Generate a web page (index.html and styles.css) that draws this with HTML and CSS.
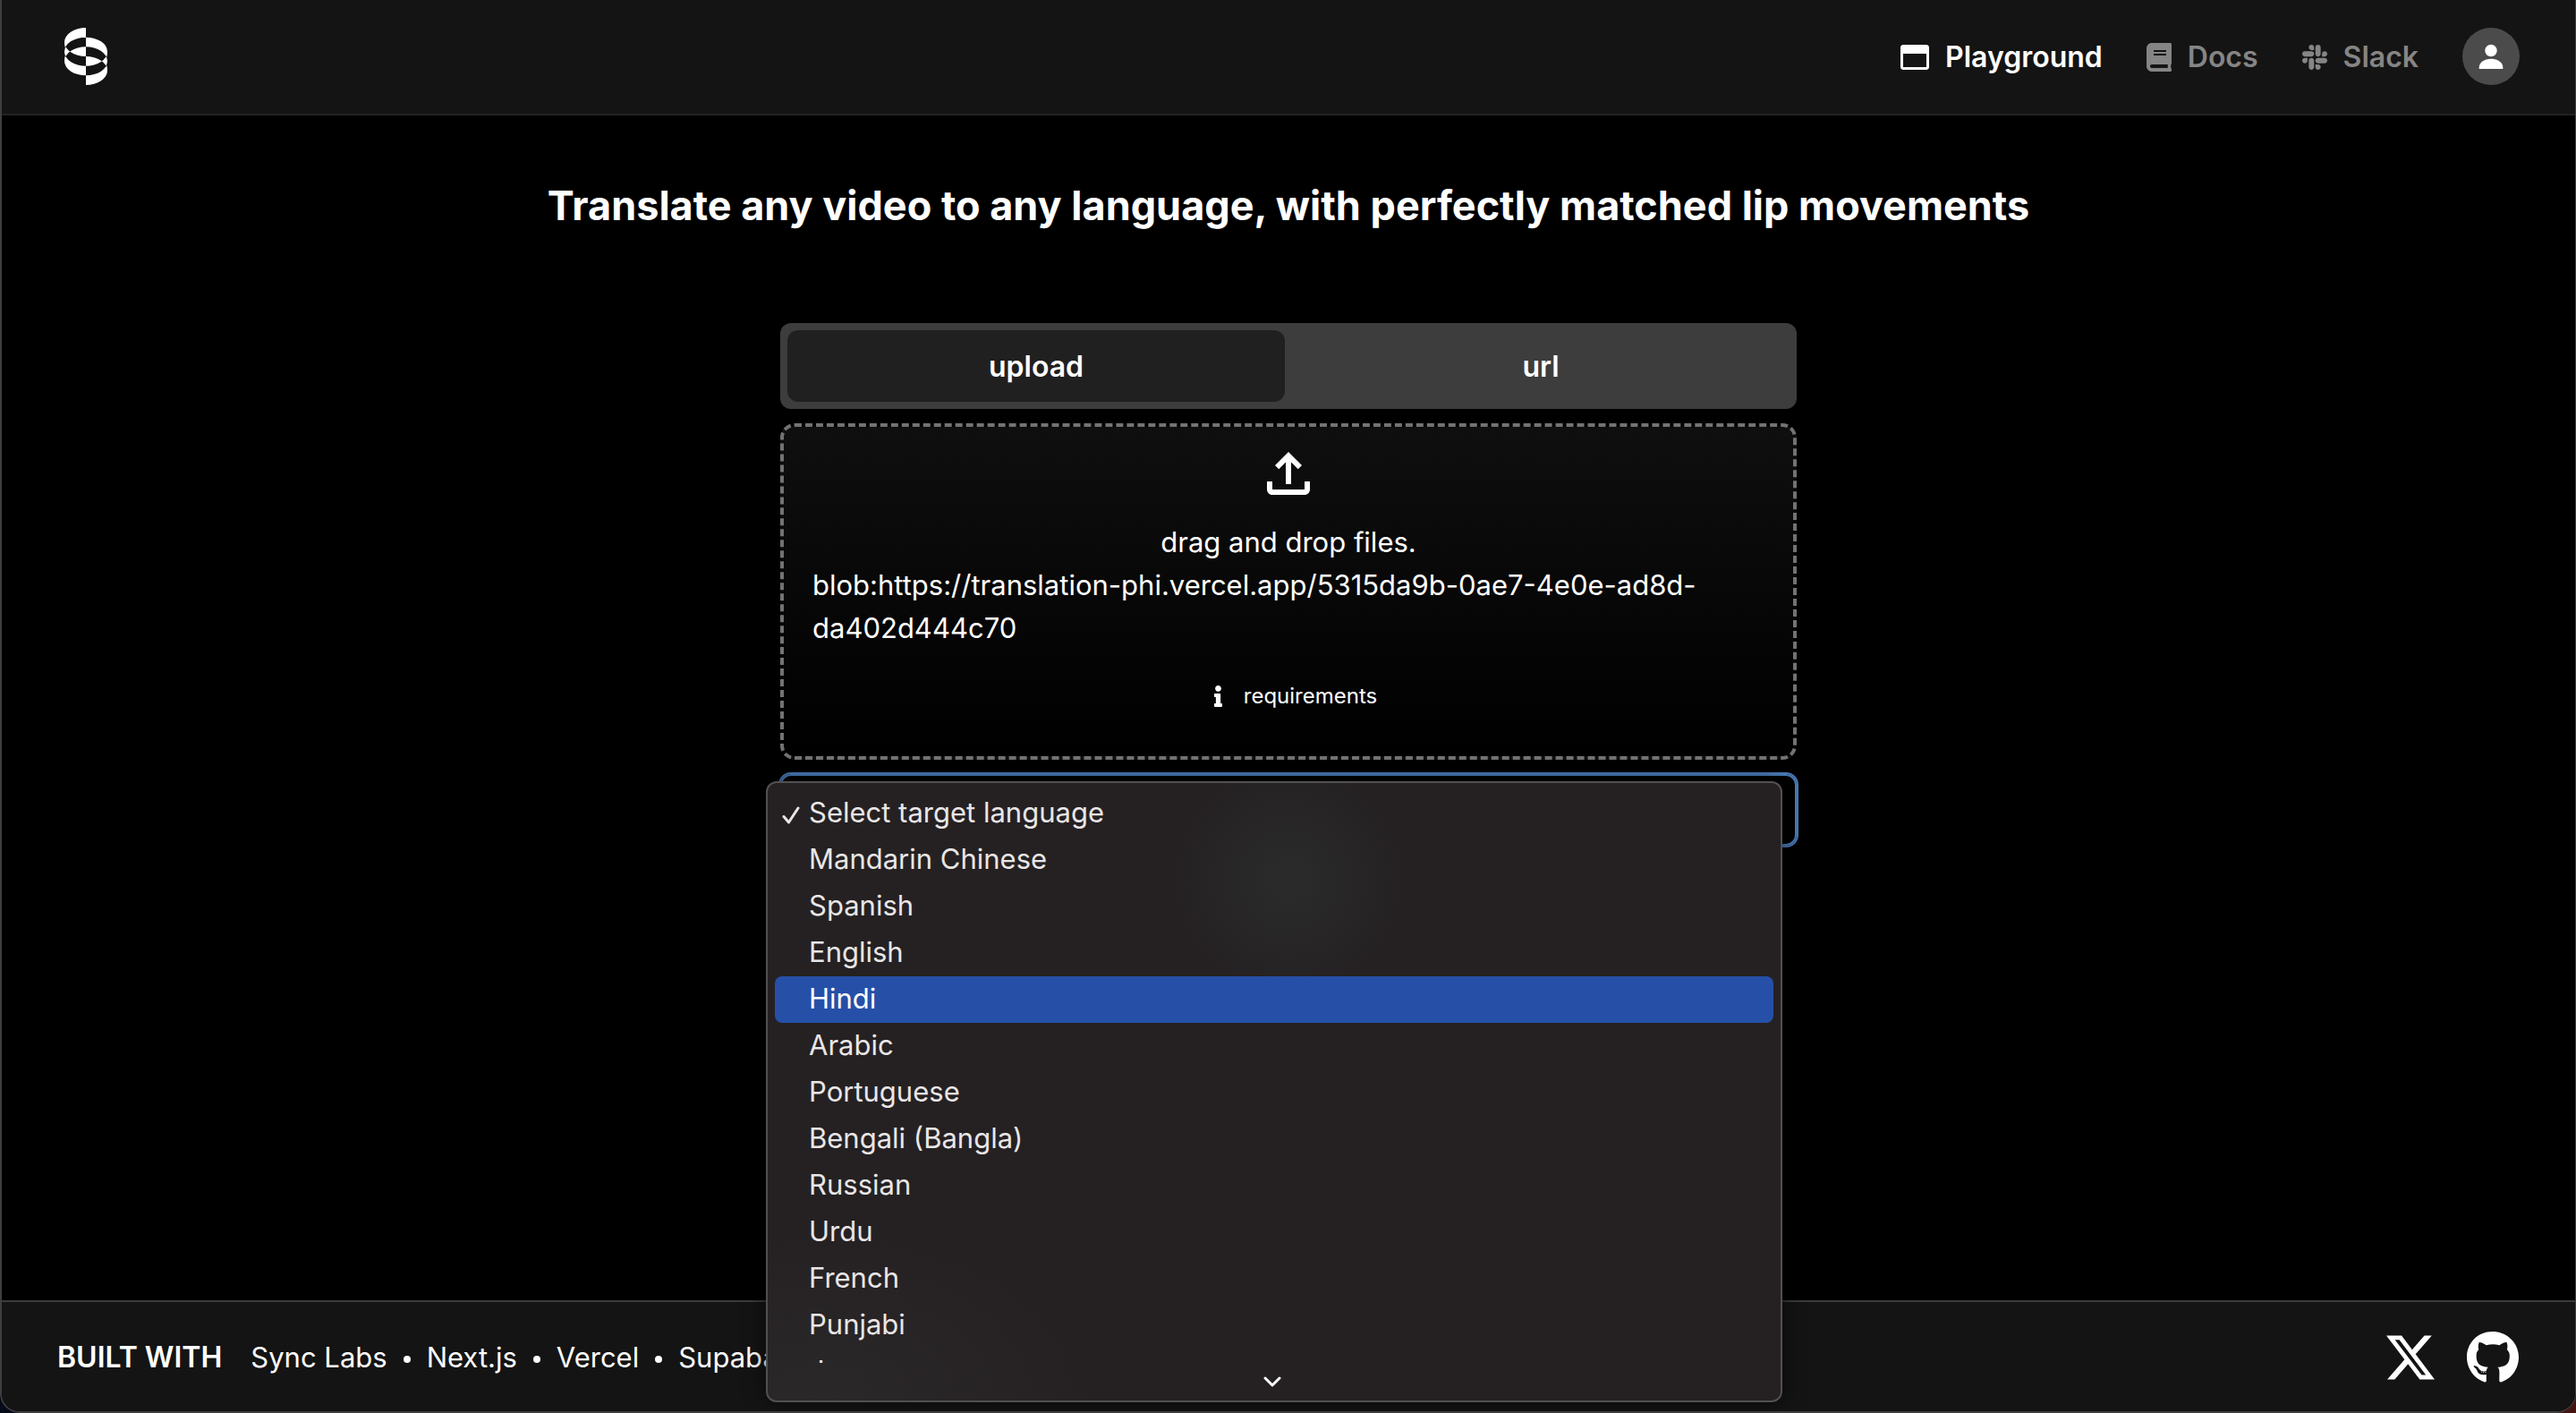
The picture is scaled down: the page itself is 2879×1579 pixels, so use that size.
FILE: index.html
```html
<!DOCTYPE html>
<html lang="en">
<head>
<meta charset="utf-8">
<meta name="viewport" content="width=device-width, initial-scale=1">
<title>Translate any video</title>
<link rel="stylesheet" href="styles.css">
</head>
<body>
<div class="window">
  <header class="header">
    <a class="logo" href="#" aria-label="Sync Labs">
      <svg viewBox="0 0 144 192" width="48" height="64" fill="currentColor" fill-rule="evenodd" aria-hidden="true">
        <path d="M72 0A72 48 0 0 0 72 96ZM72 32A72 48 0 0 0 72 128ZM72 64A72 48 0 0 0 72 160Z"/>
        <path d="M72 32A72 48 0 0 1 72 128ZM72 64A72 48 0 0 1 72 160ZM72 96A72 48 0 0 1 72 192Z"/>
        <path d="M0 48h2v12l-2 8ZM0 112h2v-12l-2-8ZM144 80h-2v12l2 8ZM144 144h-2v-12l2-8Z"/>
      </svg>
    </a>
    <nav class="nav">
      <a class="nav-link nav-link--active" href="#">
        <svg viewBox="0 0 512 512" width="32" height="32" fill="currentColor" aria-hidden="true"><path d="M464 32H48C21.500 32 0 53.500 0 80v352c0 26.500 21.500 48 48 48h416c26.500 0 48-21.500 48-48V80c0-26.500-21.500-48-48-48zm0 394c0 3.300-2.700 6-6 6H54c-3.300 0-6-2.700-6-6V192h416v234z"/></svg>
        <span>Playground</span>
      </a>
      <a class="nav-link" href="#">
        <svg viewBox="0 0 448 512" width="28" height="32" fill="currentColor" aria-hidden="true"><path d="M448 360V24c0-13.300-10.700-24-24-24H96C43 0 0 43 0 96v320c0 53 43 96 96 96h328c13.300 0 24-10.700 24-24v-16c0-7.500-3.500-14.300-8.900-18.700-4.200-15.400-4.200-59.300 0-74.700 5.400-4.300 8.900-11.100 8.900-18.600zM128 134c0-3.300 2.700-6 6-6h212c3.300 0 6 2.700 6 6v20c0 3.300-2.700 6-6 6H134c-3.300 0-6-2.700-6-6v-20zm0 64c0-3.300 2.700-6 6-6h212c3.300 0 6 2.700 6 6v20c0 3.300-2.700 6-6 6H134c-3.300 0-6-2.700-6-6v-20zm253.400 250H96c-17.700 0-32-14.300-32-32 0-17.600 14.400-32 32-32h285.400c-1.900 17.100-1.900 46.900 0 64z"/></svg>
        <span>Docs</span>
      </a>
      <a class="nav-link" href="#">
        <svg viewBox="0 0 448 512" width="28" height="32" fill="currentColor" aria-hidden="true"><path d="M94.120 315.100c0 25.900-21.160 47.060-47.060 47.060S0 341 0 315.100c0-25.900 21.160-47.060 47.060-47.060h47.060v47.060zm23.720 0c0-25.900 21.160-47.060 47.060-47.060s47.060 21.160 47.060 47.060v117.840c0 25.900-21.160 47.060-47.060 47.060s-47.060-21.160-47.060-47.060V315.100zm47.060-188.980c-25.900 0-47.060-21.160-47.060-47.060S139 32 164.900 32s47.060 21.160 47.060 47.060v47.060H164.900zm0 23.720c25.900 0 47.060 21.160 47.060 47.060s-21.160 47.060-47.060 47.060H47.060C21.160 243.960 0 222.800 0 196.900s21.160-47.060 47.060-47.060H164.900zm188.980 47.060c0-25.900 21.160-47.060 47.060-47.060 25.900 0 47.060 21.160 47.060 47.060s-21.160 47.060-47.060 47.060h-47.060V196.900zm-23.720 0c0 25.900-21.160 47.060-47.060 47.060-25.900 0-47.060-21.160-47.060-47.060V79.060c0-25.900 21.160-47.060 47.060-47.060 25.900 0 47.060 21.160 47.060 47.060V196.900zM283.100 385.880c25.900 0 47.060 21.160 47.060 47.060 0 25.900-21.160 47.060-47.060 47.060-25.900 0-47.060-21.160-47.060-47.060v-47.060h47.060zm0-23.720c-25.900 0-47.060-21.160-47.060-47.060 0-25.900 21.160-47.060 47.060-47.060h117.840c25.900 0 47.060 21.160 47.060 47.060 0 25.900-21.160 47.060-47.060 47.060H283.100z"/></svg>
        <span>Slack</span>
      </a>
      <button class="avatar" type="button" aria-label="Account">
        <svg viewBox="0 0 64 64" width="64" height="64" fill="currentColor" aria-hidden="true"><circle cx="32" cy="25.500" r="6.700"/><path d="M18.700 46v-1.500c0-5.500 5.500-9.800 13.300-9.800s13.300 4.300 13.300 9.800V46z"/></svg>
      </button>
    </nav>
  </header>

  <main class="main">
    <h1 class="title">Translate any video to any language, with perfectly matched lip movements</h1>
    <form class="form">
      <div class="tabs" role="tablist">
        <button class="tab tab--active" type="button" role="tab" aria-selected="true">upload</button>
        <button class="tab" type="button" role="tab" aria-selected="false">url</button>
      </div>
      <div class="dropzone">
        <svg class="upload-icon" viewBox="0 0 24 24" width="72" height="72" fill="currentColor" aria-hidden="true"><path d="M18 15v3H6v-3H4v3c0 1.100.900 2 2 2h12c1.100 0 2-.900 2-2v-3h-2zM7 9l1.410 1.410L11 7.830V16h2V7.830l2.590 2.580L17 9l-5-5-5 5z"/></svg>
        <p class="hint">drag and drop files.</p>
        <p class="blob">blob:https://translation-phi.vercel.app/5315da9b-0ae7-4e0e-ad8d-da402d444c70</p>
        <button class="requirements" type="button">
          <svg viewBox="0 0 192 512" width="9" height="24" fill="currentColor" aria-hidden="true"><path d="M20 424.229h20V279.771H20c-11.046 0-20-8.954-20-20V212c0-11.046 8.954-20 20-20h112c11.046 0 20 8.954 20 20v212.229h20c11.046 0 20 8.954 20 20V492c0 11.046-8.954 20-20 20H20c-11.046 0-20-8.954-20-20v-47.771c0-11.046 8.954-20 20-20zM96 0C56.235 0 24 32.235 24 72s32.235 72 72 72 72-32.235 72-72S135.764 0 96 0z"/></svg>
          <span>requirements</span>
        </button>
      </div>
      <div class="language">
        <select class="language-select" aria-label="Target language">
          <option>Select target language</option>
        </select>
        <div class="menu">
          <ul class="menu-list" role="listbox" aria-label="Languages">
            <li class="menu-item" role="option" aria-selected="true">
              <svg class="check" viewBox="0 0 20 22" width="20" height="22" fill="none" stroke="currentColor" stroke-width="3" stroke-linecap="round" stroke-linejoin="round" aria-hidden="true"><path d="M2 12.500L7.500 19 18 3"/></svg>
              Select target language
            </li>
            <li class="menu-item" role="option">Mandarin Chinese</li>
            <li class="menu-item" role="option">Spanish</li>
            <li class="menu-item" role="option">English</li>
            <li class="menu-item menu-item--hover" role="option">Hindi</li>
            <li class="menu-item" role="option">Arabic</li>
            <li class="menu-item" role="option">Portuguese</li>
            <li class="menu-item" role="option">Bengali (Bangla)</li>
            <li class="menu-item" role="option">Russian</li>
            <li class="menu-item" role="option">Urdu</li>
            <li class="menu-item" role="option">French</li>
            <li class="menu-item" role="option">Punjabi</li>
            <li class="menu-item" role="option">Japanese</li>
          </ul>
          <div class="menu-more">
            <svg viewBox="0 0 20 12" width="20" height="12" fill="none" stroke="currentColor" stroke-width="3" stroke-linecap="round" stroke-linejoin="round" aria-hidden="true"><path d="M2 2l8 8 8-8"/></svg>
          </div>
        </div>
      </div>
    </form>
  </main>

  <footer class="footer">
    <div class="credits">
      <strong class="credits-title">BUILT WITH</strong>
      <ul class="credits-list">
        <li><a href="#">Sync Labs</a></li>
        <li><a href="#">Next.js</a></li>
        <li><a href="#">Vercel</a></li>
        <li><a href="#">Supabase</a></li>
      </ul>
    </div>
    <div class="social">
      <a href="#" aria-label="X">
        <svg viewBox="0 0 24 24" width="54" height="54" fill="currentColor" aria-hidden="true"><path d="M18.901 1.153h3.680l-8.040 9.190L24 22.846h-7.406l-5.800-7.584-6.638 7.584H.474l8.600-9.830L0 1.154h7.594l5.243 6.932ZM17.610 20.644h2.039L6.486 3.240H4.298Z"/></svg>
      </a>
      <a href="#" aria-label="GitHub">
        <svg viewBox="0 0 496 512" width="58" height="60" fill="currentColor" aria-hidden="true"><path d="M165.900 397.400c0 2-2.300 3.600-5.200 3.600-3.300.300-5.600-1.300-5.600-3.600 0-2 2.300-3.600 5.200-3.600 3-.300 5.600 1.300 5.600 3.600zm-31.100-4.500c-.700 2 1.300 4.300 4.300 4.900 2.600 1 5.600 0 6.200-2s-1.300-4.300-4.300-5.200c-2.600-.700-5.500.300-6.200 2.300zm44.200-1.700c-2.900.700-4.900 2.600-4.600 4.900.300 2 2.900 3.300 5.900 2.600 2.900-.700 4.900-2.600 4.600-4.600-.300-1.900-3-3.200-5.900-2.900zM244.800 8C106.100 8 0 113.300 0 252c0 110.900 69.800 205.800 169.500 239.200 12.800 2.300 17.300-5.600 17.300-12.100 0-6.200-.300-40.400-.300-61.400 0 0-70 15-84.700-29.800 0 0-11.400-29.100-27.800-36.600 0 0-22.900-15.700 1.600-15.400 0 0 24.900 2 38.600 25.800 21.900 38.600 58.600 27.500 72.900 20.900 2.300-16 8.800-27.100 16-33.700-55.900-6.200-112.300-14.300-112.300-110.500 0-27.500 7.600-41.300 23.600-58.900-2.600-6.500-11.100-33.300 2.600-67.900 20.900-6.500 69 27 69 27 20-5.600 41.500-8.500 62.800-8.500s42.800 2.900 62.800 8.500c0 0 48.100-33.600 69-27 13.700 34.700 5.200 61.400 2.600 67.900 16 17.700 25.800 31.500 25.800 58.900 0 96.500-58.900 104.200-114.800 110.500 9.200 7.900 17 22.900 17 46.400 0 33.700-.300 75.400-.300 83.600 0 6.500 4.600 14.400 17.300 12.100C428.200 457.800 496 362.900 496 252 496 113.300 383.500 8 244.800 8z"/></svg>
      </a>
    </div>
  </footer>
</div>
</body>
</html>
```

FILE: styles.css
```css
* {
  box-sizing: border-box;
  margin: 0;
  padding: 0;
}

body {
  background: linear-gradient(90deg, #060b1a 50%, #451411 50%);
  color: #fff;
  font-family: Inter, "Liberation Sans", sans-serif;
  font-size: 31px;
  line-height: 48px;
}

a {
  color: inherit;
  text-decoration: none;
}

ul {
  list-style: none;
}

svg {
  display: block;
  flex: none;
}

button,
select {
  border: 0;
  background: none;
  color: inherit;
  font: inherit;
}

.window {
  display: flex;
  flex-direction: column;
  min-height: 100vh;
  border: solid #3f3f3f;
  border-width: 0 1px 2px 2px;
  border-radius: 0 0 22px 22px;
  background: #000;
  overflow: hidden;
}

.header {
  display: flex;
  align-items: center;
  justify-content: space-between;
  padding: 31px 62px 32px 70px;
  border-bottom: 2px solid #232325;
  background: #141414;
}

.nav {
  display: flex;
  align-items: center;
  gap: 49px;
}

.nav-link {
  display: flex;
  align-items: center;
  gap: 18px;
  padding-top: 1px;
  color: #858585;
  font-size: 32px;
  font-weight: 600;
}

.nav-link--active {
  color: #fff;
}

.avatar {
  width: 64px;
  height: 64px;
  border-radius: 50%;
  background: #4b4b4b;
}

.main {
  display: flex;
  flex: 1;
  flex-direction: column;
  align-items: center;
  gap: 99px;
  padding: 69px 32px;
}

.title {
  font-size: 45px;
  font-weight: 700;
  line-height: 64px;
  text-align: center;
}

.form {
  display: flex;
  flex-direction: column;
  gap: 16px;
  width: 100%;
  max-width: 1136px;
}

.tabs {
  display: flex;
  gap: 8px;
  padding: 8px;
  border-radius: 12px;
  background: #3d3d3d;
}

.tab {
  flex: 1;
  height: 80px;
  padding-top: 1px;
  border-radius: 12px;
  font-size: 32px;
  font-weight: 600;
}

.tab--active {
  background: #202020;
}

.dropzone {
  display: flex;
  flex-direction: column;
  align-items: center;
  padding: 16px 32px 43px;
  border: 4px dashed #737373;
  border-radius: 16px;
  background: linear-gradient(#0f0f0f, #000);
}

.hint {
  margin-top: 17px;
}

.blob {
  align-self: stretch;
}

.requirements {
  display: flex;
  align-items: center;
  gap: 24px;
  margin-top: 28px;
  padding: 0 0 0 16px;
  font-size: 24px;
}

.language {
  position: relative;
}

.language-select {
  display: block;
  width: 100%;
  height: 80px;
  padding: 0 32px;
  border: 2px solid #4a7ebb;
  border-radius: 12px;
  outline: 2px solid #4a7ab9;
  background: #000;
  appearance: none;
}

.menu {
  position: absolute;
  top: 8px;
  left: -16px;
  width: 100%;
  padding: 8px;
  border: 2px solid #525051;
  border-radius: 12px;
  background:
    radial-gradient(circle at 582px 108px, #2a2a2b 20px, #25212200 130px),
    radial-gradient(ellipse at 60px 100%, #2b2829, #25212200 300px),
    #252122;
  box-shadow: 0 0 24px #0009;
  color: #e9e6e7;
}

.menu-list {
  height: 640px;
  overflow: hidden;
}

.menu-item {
  display: flex;
  align-items: center;
  height: 52px;
  padding: 0 0 2px 38px;
  border-radius: 8px;
}

.menu-item--hover {
  background: #264fa8;
  color: #fff;
}

.check {
  margin: 6px 10px 0 -30px;
}

.menu-more {
  display: flex;
  justify-content: center;
  padding: 15px 4px 7px 0;
  color: #fff;
}

.footer {
  display: flex;
  align-items: center;
  justify-content: space-between;
  padding: 32px 63px 30px 62px;
  border-top: 2px solid #3b3b3d;
  background: #141414;
}

.credits,
.credits-list,
.credits-list li {
  display: flex;
  align-items: center;
}

.credits {
  gap: 32px;
}

.credits-title {
  font-size: 32px;
  font-weight: 600;
}

.credits-list li + li::before {
  content: "";
  width: 8px;
  height: 8px;
  margin: 4px 18px 0;
  border-radius: 50%;
  background: currentColor;
}

.social {
  display: flex;
  align-items: center;
  gap: 36px;
}
```
